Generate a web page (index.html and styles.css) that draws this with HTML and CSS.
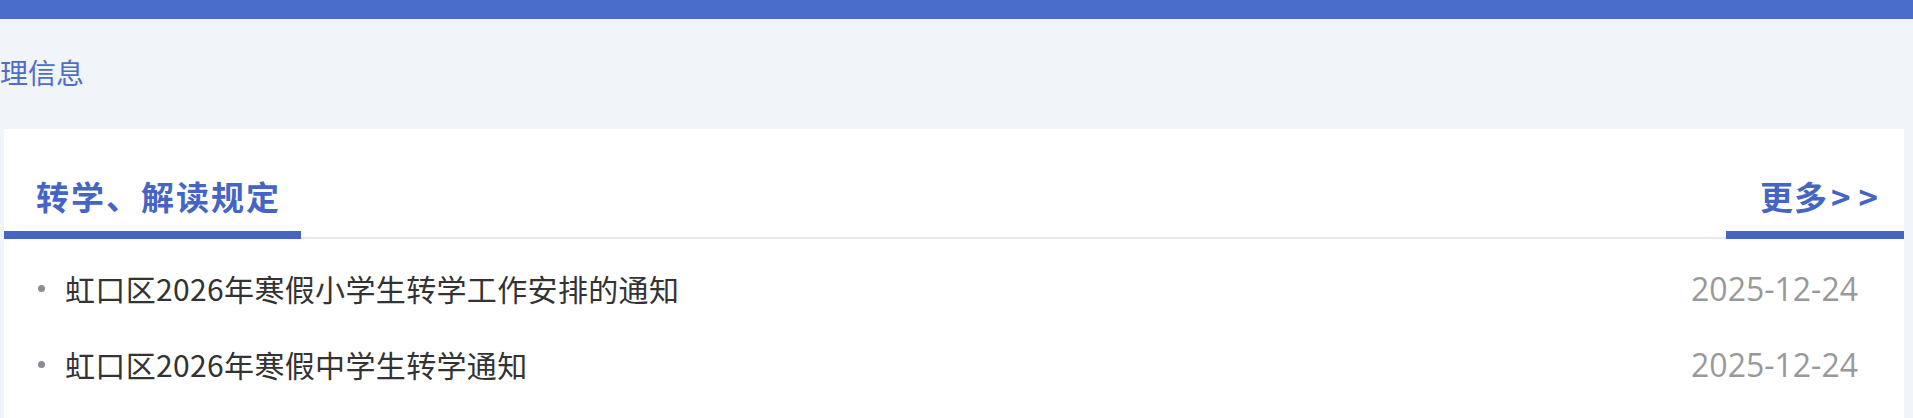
FILE: index.html
```html
<!DOCTYPE html>
<html lang="zh-CN">
<head>
    <meta charset="UTF-8">
    <meta name="viewport" content="width=device-width, initial-scale=1.0">
    <title>转学、解读规定</title>
    <link rel="stylesheet" href="styles.css">
</head>
<body>
    <div class="top-bar"></div>
    <div class="crumb">理信息</div>
    <div class="panel">
        <div class="panel-head">
            <h2 class="panel-title">转学、解读规定</h2>
            <a class="more" href="#">更多<span class="arrows">&gt;&gt;</span></a>
        </div>
        <ul class="news-list">
            <li>
                <span class="dot"></span>
                <a class="news-title" href="#">虹口区2026年寒假小学生转学工作安排的通知</a>
                <span class="news-date">2025-12-24</span>
            </li>
            <li>
                <span class="dot"></span>
                <a class="news-title" href="#">虹口区2026年寒假中学生转学通知</a>
                <span class="news-date">2025-12-24</span>
            </li>
        </ul>
    </div>
</body>
</html>
```

FILE: styles.css
```css
body {
    margin: 0;
    background-color: #f1f4f9;
    font-family: "Noto Sans CJK SC", "Noto Sans", sans-serif;
    overflow: hidden;
}
a {
    text-decoration: none;
}
.top-bar {
    height: 19px;
    background-color: #4a6dcb;
}
.crumb {
    padding: 33px 0 37px;
    font-size: 28px;
    line-height: 40px;
    color: #4f6dc8;
}
.panel {
    margin: 0 9px 0 4px;
    padding: 47px 0 40px;
    background-color: white;
}
.panel-head {
    display: flex;
    justify-content: space-between;
    align-items: flex-end;
    border-bottom: 2px solid #e6e8ef;
}
.panel-title {
    margin: 0 0 -2px;
    padding: 0 20px 15px 32px;
    font-size: 33px;
    line-height: 40px;
    letter-spacing: 2px;
    font-weight: bold;
    color: #4565c4;
    border-bottom: 8px solid #4565c4;
}
.more {
    margin-bottom: -2px;
    padding: 0 18px 15px 34px;
    font-size: 33px;
    line-height: 40px;
    letter-spacing: 1px;
    font-weight: bold;
    color: #4565c4;
    border-bottom: 8px solid #4565c4;
}
.arrows {
    margin-left: 3px;
    letter-spacing: 8px;
}
.news-list {
    list-style: none;
    margin: 0;
    padding: 11px 46px 0 34px;
}
.news-list li {
    display: flex;
    align-items: center;
    height: 76px;
}
.dot {
    width: 7px;
    height: 7px;
    border-radius: 50%;
    background-color: #8a8d96;
    margin-right: 20px;
}
.news-title {
    flex: 1;
    font-size: 30px;
    letter-spacing: 0.35px;
    color: #333;
}
.news-date {
    font-family: "Open Sans", sans-serif;
    font-size: 32px;
    color: #999;
}
```
